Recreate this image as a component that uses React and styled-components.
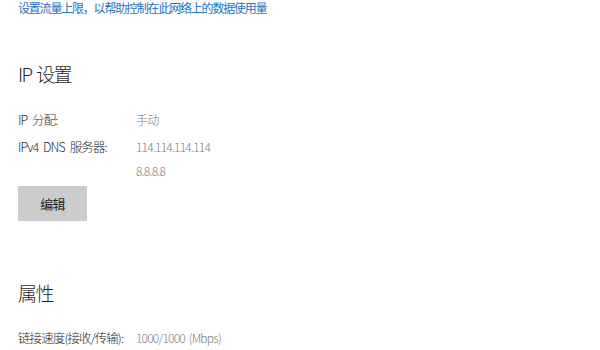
import React from 'react';
import styled, { createGlobalStyle } from 'styled-components';

const Global = createGlobalStyle`
  body {
    margin: 0;
    background: #fff;
    font-family: "Noto Sans CJK SC", "Noto Sans", sans-serif;
  }
`

const Page = styled.div`
  padding: 0 18px;
  width: 600px;
  height: 350px;
  box-sizing: border-box;
  overflow: hidden;
  display: flex;
  flex-direction: column;
  align-items: flex-start;
`

const Link = styled.a`
  display: block;
  font-size: 12px;
  line-height: 16px;
  letter-spacing: -1.2px;
  color: #1a73c4;
  text-decoration: none;
`

const Heading = styled.h2`
  margin: ${p => p.top}px 0 0;
  font-size: 19px;
  line-height: 28px;
  font-weight: 300;
  letter-spacing: -1.6px;
  word-spacing: 2px;
  color: #1f1f1f;
`

const InfoList = styled.div`
  margin-top: ${p => p.top}px;
  display: grid;
  grid-template-columns: 118px auto;
  row-gap: 3px;
`

const Label = styled.div`
  font-size: 12.5px;
  line-height: 24px;
  font-weight: 300;
  letter-spacing: -0.9px;
  word-spacing: 3px;
  color: #1f1f1f;
`

const Value = styled.div`
  font-size: 12px;
  line-height: 24px;
  font-weight: 300;
  letter-spacing: -0.8px;
  word-spacing: 2px;
  color: #7d7d7d;
`

const Button = styled.button`
  margin-top: 3px;
  width: 69px;
  height: 35px;
  border: none;
  background: #cccccc;
  font-family: inherit;
  font-size: 13px;
  font-weight: 400;
  letter-spacing: -0.8px;
  color: #1f1f1f;
  padding: 0;
`

const App = () => (
  <>
    <Global />
    <Page>
      <Link>设置流量上限，以帮助控制在此网络上的数据使用量</Link>

      <Heading top={44}>IP 设置</Heading>
      <InfoList top={20}>
        <Label>IP 分配:</Label>
        <Value>手动</Value>
        <Label>IPv4 DNS 服务器:</Label>
        <Value>114.114.114.114<br />8.8.8.8</Value>
      </InfoList>
      <Button>编辑</Button>

      <Heading top={58}>属性</Heading>
      <InfoList top={19}>
        <Label>链接速度(接收/传输):</Label>
        <Value>1000/1000 (Mbps)</Value>
      </InfoList>
    </Page>
  </>
)

export default App;
